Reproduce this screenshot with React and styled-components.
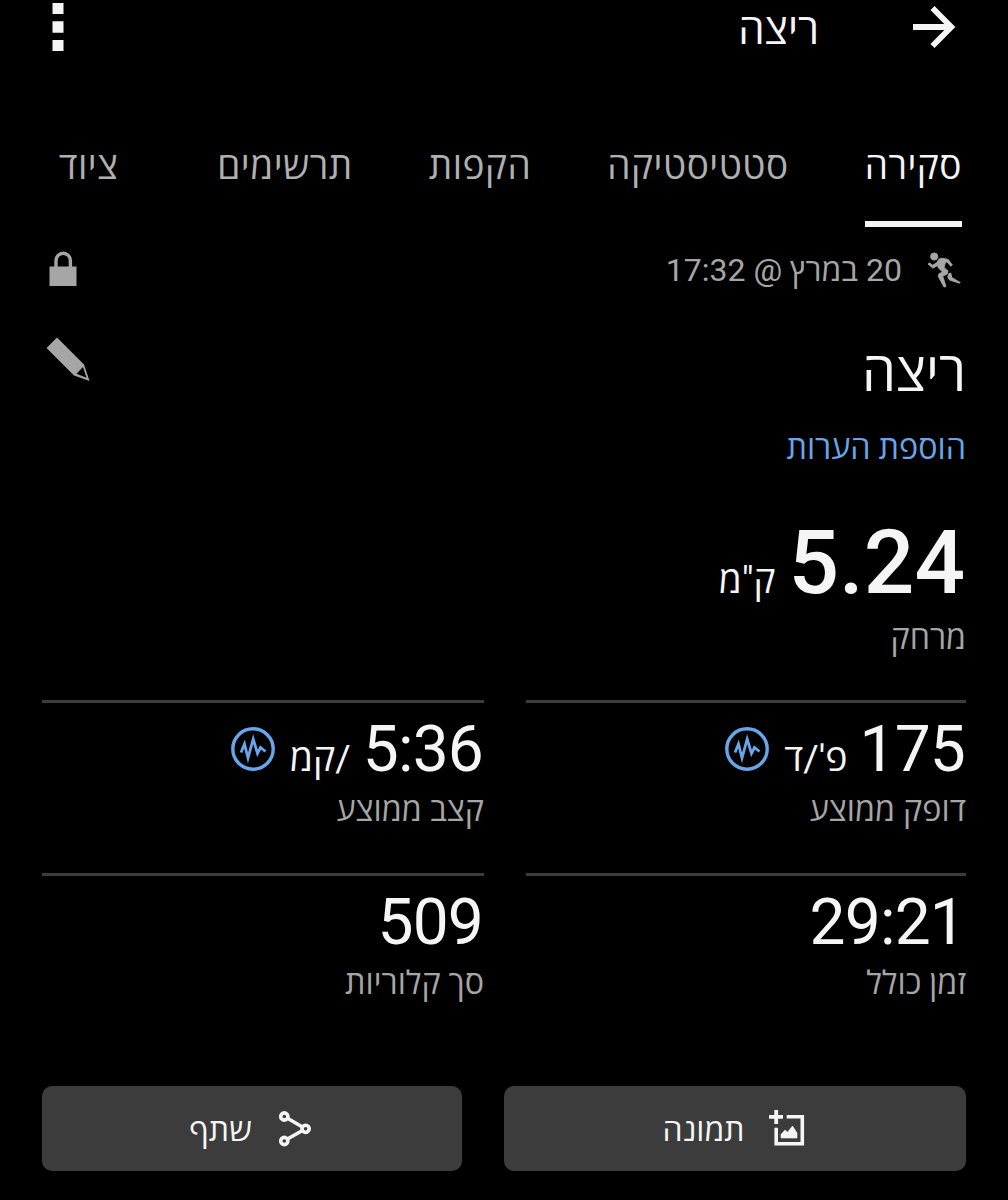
import React from "react";
import styled, { createGlobalStyle } from "styled-components";

const Global = createGlobalStyle`
  body { margin: 0; background: #000; }
  * { box-sizing: border-box; }
  svg { display: block; flex: none; overflow: visible; }
`;

const Screen = styled.main`
  direction: rtl;
  width: 1008px;
  height: 1200px;
  overflow: hidden;
  padding: 0 42px;
  display: flex;
  flex-direction: column;
  background: #000;
  color: #f5f5f5;
  font-family: Roboto, "Open Sans", sans-serif;
`;

const Text = styled.span`
  display: block;
  white-space: nowrap;
  font-size: ${(p) => p.$size}px;
  line-height: ${(p) => p.$line}px;
  letter-spacing: ${(p) => p.$track || 0}px;
  font-weight: ${(p) => p.$weight || 400};
  color: ${(p) => p.$color || "#f5f5f5"};
`;

const Header = styled.header`
  display: flex;
  height: 56px;
  padding: 0 11px 0 10px;
`;

const IconButton = styled.button`
  border: 0;
  padding: 0;
  background: none;
  color: inherit;
  height: 54px;
  display: flex;
  align-items: center;
`;

const HeaderTitle = styled.h1`
  margin: 0;
  margin-inline: 94px auto;
  font-weight: 400;
`;

const Tabs = styled.nav`
  display: flex;
  gap: 76px;
  margin-top: 76px;
  padding: 0 4px;
`;

const Tab = styled.a`
  height: 95px;
  padding: 0 ${(p) => p.$pad || 0}px;
  border-bottom: 6px solid ${(p) => (p.$active ? "#f5f5f5" : "transparent")};
`;

const MetaRow = styled.div`
  display: flex;
  align-items: center;
  height: 86px;
  gap: 25px;
  padding: 0 5px 0 7px;

  & > :last-child { margin-inline-start: auto; margin-bottom: 2px; }
`;

const TitleRow = styled.div`
  display: flex;
  justify-content: space-between;
  height: 115px;
  padding-left: 4px;

  & > svg { margin-top: 24px; }
`;

const Distance = styled.section`
  margin: 44px 0 37px;
`;

const ValueRow = styled.div`
  display: flex;
  align-items: baseline;
  gap: ${(p) => p.$gap}px;
  height: ${(p) => p.$height}px;
  padding-inline-start: 1px;

  & > svg { align-self: center; margin-inline-start: 3px; margin-bottom: 2px; }
`;

const StatGrid = styled.section`
  display: grid;
  grid-template-columns: 440px 442px;
  grid-auto-rows: 172.5px;
  column-gap: 42px;
`;

const Stat = styled.div`
  border-top: 3px solid #3c3c3c;
  padding-top: 7px;
`;

const Actions = styled.footer`
  display: grid;
  grid-template-columns: 462px 420px;
  gap: 42px;
  margin-top: 41px;
`;

const ActionButton = styled.button`
  height: 85px;
  border: 0;
  border-radius: 10px;
  background: #3c3c3c;
  padding: 0 4px 0 0;
  font-family: inherit;
  display: flex;
  align-items: center;
  justify-content: center;
  gap: ${(p) => p.$gap}px;
`;

const ActionLabel = styled(Text)`
  padding-top: 3px;
`;

const GREY = "#a6a6a6";
const BLUE = "#68a6ea";

const Arrow = () => (
  <svg width="42" height="42" viewBox="0 0 42 42" fill="none" stroke="#f5f5f5" strokeWidth="5.800">
    <path d="M0 21H37.500M19.500 2L38.300 21L19.500 40" />
  </svg>
);

const More = () => (
  <svg width="12" height="48" viewBox="0 0 12 48" fill="#f5f5f5">
    <path d="M0.500 0H11.500V11H0.500zM0.500 18.300H11.500V29.700H0.500zM0.500 37H11.500V48H0.500z" />
  </svg>
);

const Runner = () => (
  <svg width="34" height="37" viewBox="0 0 34 37" fill={GREY} stroke={GREY} strokeWidth="0.900" strokeLinejoin="round">
    <circle cx="7.200" cy="4.500" r="3.600" />
    <path d="M1 12L2.500 11L5.800 13.200L10 10.500L11.800 7.200L15.200 6.200L21.200 7.500L25.300 13L23.700 14.200L20.200 10L18.500 10.200L17 15.500L21 19L20.300 22L15.700 24.200L19 34.500L17 35L11.300 24.500L11.800 22L15.500 20L11.500 16L10.500 13.500L6 16.200z" />
    <path d="M21.800 21.800L23.800 21L24.700 25.500L33.200 30.500L32.500 31.200L22.500 28L20.800 25z" />
  </svg>
);

const Lock = () => (
  <svg width="28" height="36" viewBox="0 0 28 36">
    <path d="M0.500 15.500H27.500V35H0.500z" fill={GREY} />
    <path d="M7 17V9.500a7.200 7.200 0 0 1 14.400 0V17" fill="none" stroke={GREY} strokeWidth="3.400" />
  </svg>
);

const Pencil = () => (
  <svg width="44" height="44" viewBox="0 0 44 44">
    <path d="M11 0.500L38 27.500L43.500 44L28 38.500L0.500 11z" fill={GREY} />
    <path d="M37 30L30.500 36.700L40.500 40.800z" fill="#000" />
  </svg>
);

const Pulse = () => (
  <svg width="44" height="44" viewBox="0 0 44 44" fill="none" stroke={BLUE}>
    <circle cx="22" cy="22" r="20.200" strokeWidth="3.400" />
    <path d="M10 25.500L13.500 17L17 31L22.200 12L26.500 26.500L29.500 20.500L34.500 24.500" strokeWidth="2.800" />
  </svg>
);

const AddImage = () => (
  <svg width="35" height="38" viewBox="0 0 35 38">
    <path d="M7.200 0V14M0 6.800H14" stroke="#f5f5f5" strokeWidth="3.800" />
    <path d="M17.700 6.700H33.300V33.700H7.200V17.700" fill="none" stroke="#f5f5f5" strokeWidth="3.600" />
    <path d="M12 28V24.500L16 20L18.500 22.200L23.500 16L28 23V28z" fill="#f5f5f5" stroke="#f5f5f5" strokeWidth="0.600" strokeLinejoin="round" />
  </svg>
);

const Share = () => (
  <svg width="32" height="36" viewBox="0 0 32 36" fill="none" stroke="#f5f5f5" strokeWidth="3.600">
    <path d="M8.500 7.300L23 15.700M8.500 28L23 19.800" />
    <circle cx="5.300" cy="5.500" r="3.600" />
    <circle cx="5.300" cy="30" r="3.600" />
    <circle cx="26.600" cy="17.800" r="3.600" />
  </svg>
);

const TABS = [
  { label: "סקירה", active: true },
  { label: "סטטיסטיקה" },
  { label: "הקפות" },
  { label: "תרשימים" },
  { label: "ציוד", pad: 23 },
];

const STATS = [
  { value: "175", unit: "פ'/ד", label: "דופק ממוצע", pulse: true },
  { value: "5:36", unit: "/קמ", label: "קצב ממוצע", pulse: true },
  { value: "29:21", label: "זמן כולל" },
  { value: "509", label: "סך קלוריות" },
];

export default function App() {
  return (
    <Screen>
      <Global />
      <Header>
        <IconButton><Arrow /></IconButton>
        <HeaderTitle><Text $size={42} $line={60}>ריצה</Text></HeaderTitle>
        <IconButton><More /></IconButton>
      </Header>
      <Tabs>
        {TABS.map((t) => (
          <Tab key={t.label} $active={t.active} $pad={t.pad}>
            <Text $size={37} $line={70} $track={0.5} $color={t.active ? "#f5f5f5" : "#b0b0b0"}>{t.label}</Text>
          </Tab>
        ))}
      </Tabs>
      <MetaRow>
        <Runner />
        <Text $size={32} $line={86} $color={GREY}>20 במרץ @ 17:32</Text>
        <Lock />
      </MetaRow>
      <TitleRow>
        <Text $size={54} $line={119}>ריצה</Text>
        <Pencil />
      </TitleRow>
      <Text $size={32.3} $line={41} $color={BLUE}>הוספת הערות</Text>
      <Distance>
        <ValueRow $gap={13} $height={100}>
          <Text $size={89} $line={100} $weight={500}>5.24</Text>
          <Text $size={37} $line={50}>ק"מ</Text>
        </ValueRow>
        <Text $size={32.2} $line={50} $color={GREY}>מרחק</Text>
      </Distance>
      <StatGrid>
        {STATS.map((s) => (
          <Stat key={s.label}>
            <ValueRow $gap={12} $height={80}>
              <Text $size={64} $line={80} $track={-0.8}>{s.value}</Text>
              {s.unit && <Text $size={37.5} $line={50}>{s.unit}</Text>}
              {s.pulse && <Pulse />}
            </ValueRow>
            <Text $size={32.3} $line={41} $color={GREY}>{s.label}</Text>
          </Stat>
        ))}
      </StatGrid>
      <Actions>
        <ActionButton $gap={24}><AddImage /><ActionLabel $size={32} $line={85}>תמונה</ActionLabel></ActionButton>
        <ActionButton $gap={27}><Share /><ActionLabel $size={32} $line={85}>שתף</ActionLabel></ActionButton>
      </Actions>
    </Screen>
  );
}
